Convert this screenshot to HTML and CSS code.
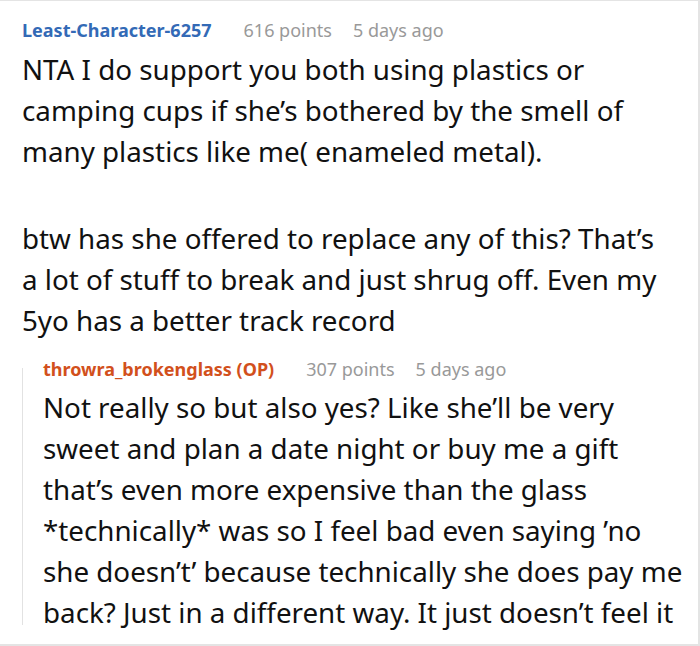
FILE: index.html
```html
<!DOCTYPE html>
<html>
<head>
<meta charset="utf-8">
<link rel="stylesheet" href="styles.css">
</head>
<body>
<div class="frame">
  <div class="comment">
    <div class="meta">
      <span class="user">Least-Character-6257</span>
      <span class="info">616 points</span>
      <span class="info">5 days ago</span>
    </div>
    <div class="body top-body">
      <p>NTA I do support you both using plastics or camping cups if she’s bothered by the smell of many plastics like me( enameled metal).</p>
      <p>btw has she offered to replace any of this? That’s a lot of stuff to break and just shrug off. Even my 5yo has a better track record</p>
    </div>
    <div class="reply">
      <div class="meta">
        <span class="user op">throwra_brokenglass (OP)</span>
        <span class="info">307 points</span>
        <span class="info">5 days ago</span>
      </div>
      <div class="body">
        <p>Not really so but also yes? Like she’ll be very sweet and plan a date night or buy me a gift that’s even more expensive than the glass *technically* was so I feel bad even saying ’no she doesn’t’ because technically she does pay me back? Just in a different way. It just doesn’t feel it</p>
      </div>
    </div>
  </div>
</div>
</body>
</html>
```
FILE: styles.css
```css
html, body {
  margin: 0;
  padding: 0;
  background: #fff;
}
.frame {
  box-sizing: border-box;
  width: 700px;
  height: 646px;
  overflow: hidden;
  border-top: 1px solid #e4e4e4;
  border-right: 2px solid #e4e4e4;
  border-bottom: 2px solid #e4e4e4;
  font-family: "Noto Sans", "Open Sans", sans-serif;
  color: #111;
}
.comment {
  padding: 17px 10px 0 22px;
}
.meta {
  display: flex;
  gap: 21px;
  font-size: 18px;
  line-height: 24px;
}
.user {
  font-weight: 700;
  color: #336ab6;
  margin-right: 11px;
}
.user.op {
  color: #d2501c;
}
.info {
  color: #999;
}
.body {
  font-size: 27.75px;
  line-height: 41px;
}
.body p {
  margin: 0;
}
.body p + p {
  margin-top: 46px;
}
.top-body {
  margin-top: 7px;
  padding-right: 16px;
}
.reply {
  position: relative;
  margin-top: 16px;
  padding-left: 21px;
}
.reply::before {
  content: "";
  position: absolute;
  left: 0;
  top: 11px;
  bottom: 8px;
  border-left: 1px solid #e2e2e2;
}
.reply .body {
  margin-top: 6px;
}
```
